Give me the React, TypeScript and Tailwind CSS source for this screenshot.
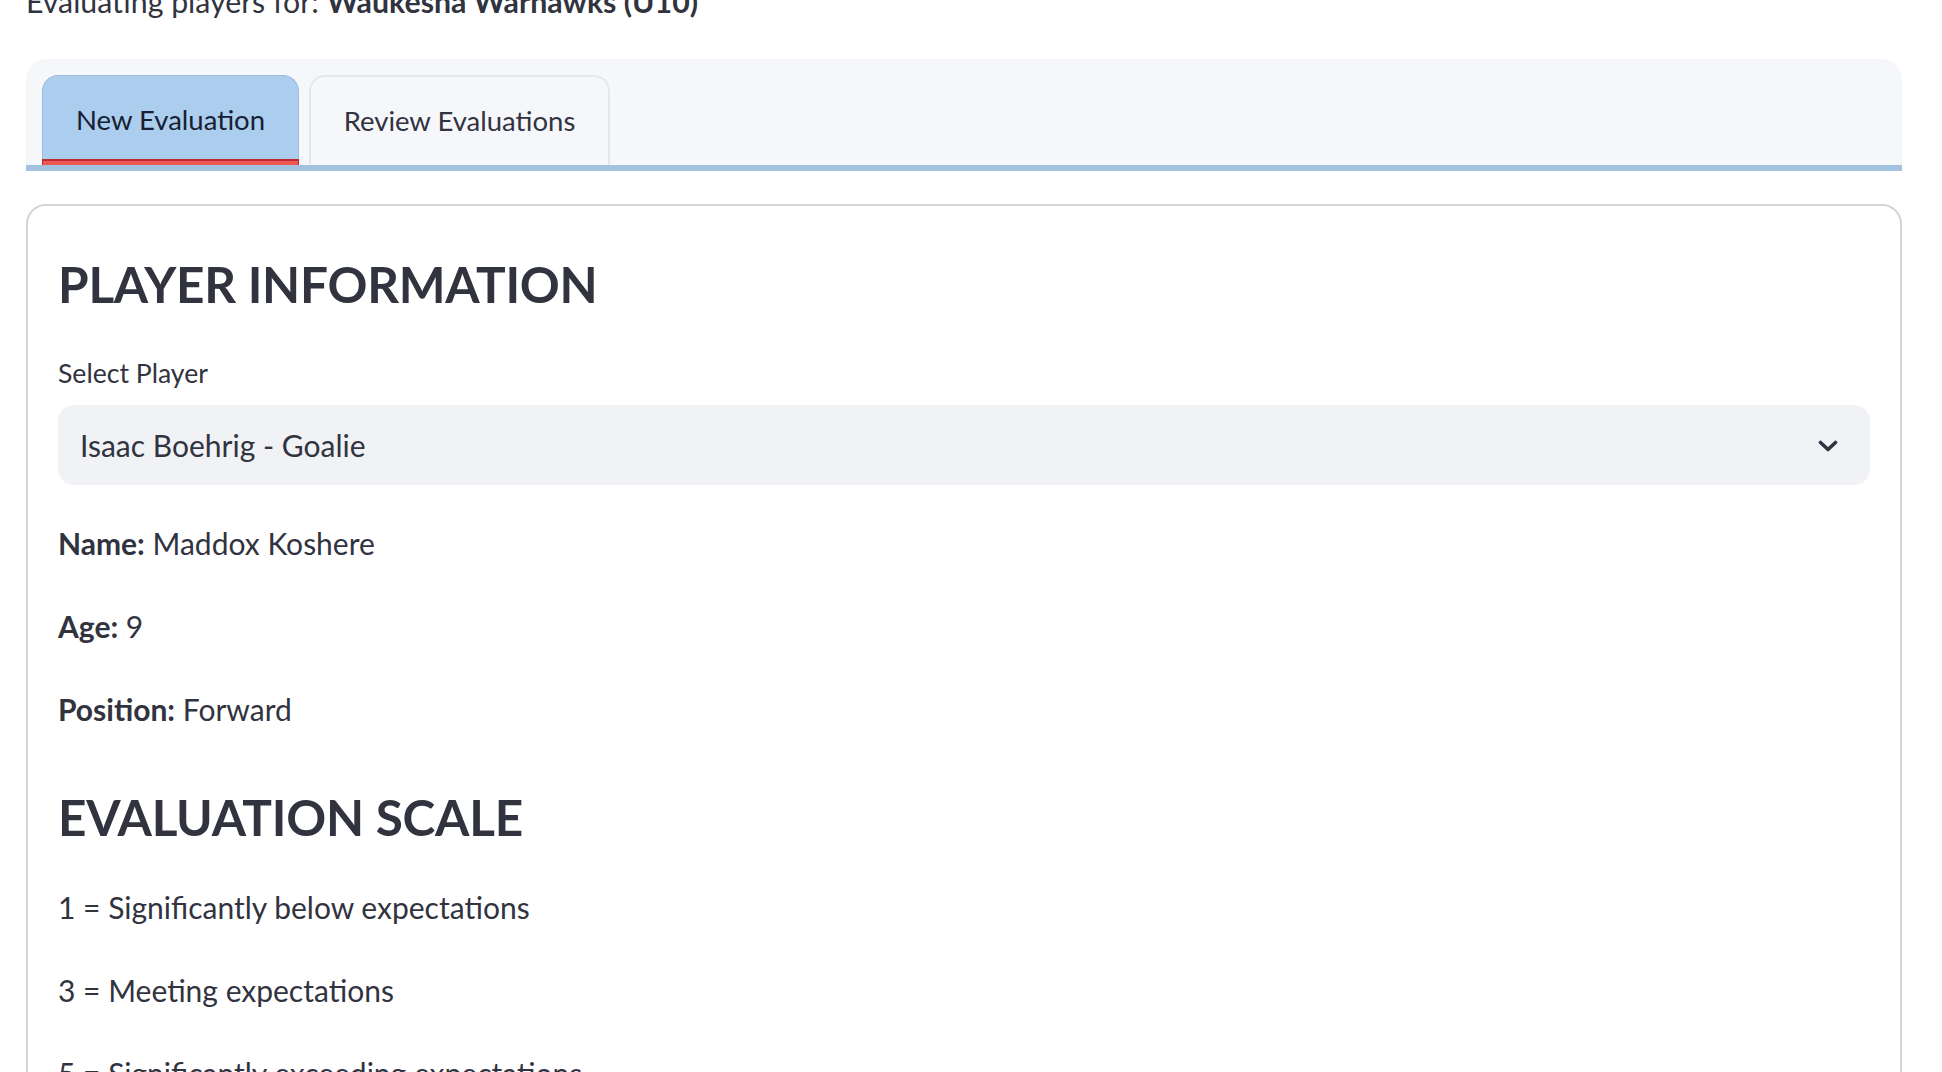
import { useState } from 'react';

const players = ['Isaac Boehrig - Goalie'];

interface TabProps {
  label: string;
  active: boolean;
  onClick: () => void;
}

function Tab({ label, active, onClick }: TabProps) {
  if (active) {
    return (
      <button
        onClick={onClick}
        className="relative flex h-[90px] w-[257px] items-center justify-center rounded-t-[16px] border border-b-0 border-[#9cbde0] bg-[#abcdee] text-[27.5px] text-[#172033]"
      >
        <span className="-mt-[1px]">{label}</span>
        <span className="absolute -left-px -right-px bottom-0 h-[6px] border-t-2 border-x border-[#bd2a30] bg-[#ef5753]" />
      </button>
    );
  }
  return (
    <button
      onClick={onClick}
      className="flex h-[90px] w-[301px] items-center justify-center rounded-t-[16px] border-2 border-b-0 border-[#e5e7ec] bg-[#f6f7fb] text-[27.5px] text-[#31333f]"
    >
      <span className="-mt-[1px]">{label}</span>
    </button>
  );
}

function InfoLine({ label, value }: { label: string; value: string }) {
  return (
    <p className="text-[30px] leading-[51px]">
      <span className="font-bold">{label}</span> {value}
    </p>
  );
}

export default function App() {
  const [tab, setTab] = useState(0);
  const [player] = useState(players[0]);

  return (
    <div className="h-[1072px] w-full overflow-hidden bg-white pl-[26px] pr-[40px] font-[Lato,sans-serif] text-[#31333f]">
      <p className="-mt-[15px] text-[30.3px] leading-[32px]">
        Evaluating players for: <span className="font-bold">Waukesha Warhawks (U10)</span>
      </p>

      <div className="mt-[42px] rounded-t-[20px] border-b-[6px] border-[#a3c2e0] bg-[#f6f7fb] pl-[16px] pt-[16px]">
        <div className="flex items-end gap-[10px]">
          <Tab label="New Evaluation" active={tab === 0} onClick={() => setTab(0)} />
          <Tab label="Review Evaluations" active={tab === 1} onClick={() => setTab(1)} />
        </div>
      </div>

      <div className="mt-[33px] rounded-[20px] border-2 border-[#d5d5d7] px-[30px] pb-[40px] pt-[48px]">
        <h2 className="text-[49.5px] font-bold leading-[60px] tracking-[-0.005em]">PLAYER INFORMATION</h2>

        <label className="mt-[43px] block text-[26.6px] leading-[32px]">Select Player</label>
        <div className="mt-[16px] flex h-[80px] items-center justify-between rounded-[16px] bg-[#f0f2f6] pl-[22px] pr-[32px]">
          <span className="text-[30px] leading-[36px]">{player}</span>
          <svg width="20" height="12" viewBox="0 0 20 12" fill="none" className="mt-[2px]">
            <polyline points="2.5,2.5 10,9.5 17.5,2.5" stroke="#31333f" strokeWidth="3.6" strokeLinecap="round" strokeLinejoin="round" />
          </svg>
        </div>

        <div className="mt-[33px] flex flex-col gap-[32px]">
          <InfoLine label="Name:" value="Maddox Koshere" />
          <InfoLine label="Age:" value="9" />
          <InfoLine label="Position:" value="Forward" />
        </div>

        <h2 className="mt-[52px] text-[49.5px] font-bold leading-[60px] tracking-[-0.005em]">EVALUATION SCALE</h2>

        <div className="mt-[35px] flex flex-col gap-[32px] text-[30px] leading-[51px]">
          <p>1 = Significantly below expectations</p>
          <p>3 = Meeting expectations</p>
          <p>5 = Significantly exceeding expectations</p>
        </div>
      </div>
    </div>
  );
}
